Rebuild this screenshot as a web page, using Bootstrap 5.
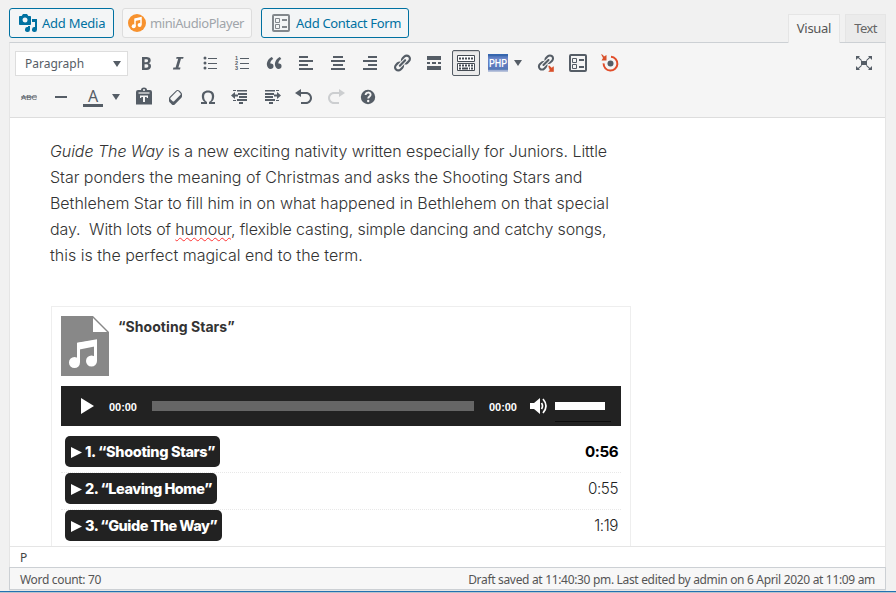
<!DOCTYPE html>
<html lang="en">
<head>
<meta charset="utf-8">
<meta name="viewport" content="width=device-width, initial-scale=1">
<title>Edit post</title>
<link rel="stylesheet" href="https://cdn.jsdelivr.net/npm/bootstrap@5.3.0/dist/css/bootstrap.min.css">
<style>
body{background:#f1f1f1;font-family:"Noto Sans","Open Sans",sans-serif;font-size:13px;color:#555d66;height:593px;overflow:hidden}
svg{display:block;flex:none}
.wp-page{height:593px;padding:0 10px 0 9px}
.media-bar{height:42px;padding-top:8px}
.btn-media{--bs-btn-font-size:13px;--bs-btn-color:#0071a1;--bs-btn-bg:#f3f5f6;--bs-btn-border-color:#0071a1;--bs-btn-border-radius:3px;--bs-btn-padding-x:0;--bs-btn-padding-y:0;height:30px;line-height:28px;padding-left:8px;letter-spacing:-.24px;white-space:nowrap;text-align:left}
.btn-media.disabled{--bs-btn-disabled-color:#a0a5aa;--bs-btn-disabled-bg:#f7f7f7;--bs-btn-disabled-border-color:#ddd;--bs-btn-disabled-opacity:1;letter-spacing:-.42px;padding-left:5px}
.w-add{width:105px}.w-mini{width:130px;margin-left:8px}.w-form{width:148px;margin-left:9px;letter-spacing:-.32px}
.w-form svg{margin:0 6px 0 2px}
.w-mini svg{margin-right:4px}
.ed-tab{height:28px;border:1px solid #e5e5e5;border-bottom:0;background:#ebebeb;color:#666;line-height:27px;letter-spacing:-.6px;text-align:center}
.ed-tab.current{background:#f5f5f5;color:#555;height:29px;width:52px;margin-right:5px;letter-spacing:-.3px}
.ed-tab.other{width:41px}
.tabs-row{height:29px;margin-bottom:-1px;z-index:1}
.editor{border:1px solid #e5e5e5;border-top-color:#ccd0d4;height:549px;background:#fff}
.tools{height:75px;background:#f5f5f5;border-bottom:1px solid #ddd;color:#555d66;padding:3px 0 0 3px}
.tool-row{height:34px}
.tool{width:32px;height:34px;display:flex;align-items:center;justify-content:center;flex:none}
.format-select{width:113px;height:25px;border:1px solid #ddd;background:#fff;font-size:12px;margin:0 2px;padding:1px 6px 0 9px}
.caret-cell{width:19px;height:34px;flex:none}
.caret-cell svg{margin-left:3px}
.caret-cell.narrow{width:16px}
.caret-cell.narrow svg{margin-left:0}
.full-tool{margin-right:3px}
.pressed{width:28px;height:26px;border:1px solid #555d66;border-radius:2px;background:#ebebeb;box-shadow:inset 0 1px 1px #ccc}
.doc{height:429px;overflow:hidden;padding:20px 0 0 41px;font-family:Inter,"Open Sans",sans-serif;color:#333;border-bottom:1px solid #e5e5e5}
.prose{font-size:16px;font-weight:300;line-height:26px;height:168px;white-space:pre;margin-left:-1px}
.prose div{height:26px}
.l1{letter-spacing:-.063px}.l2{letter-spacing:-.035px}.l3{letter-spacing:-.02px}.l4{letter-spacing:-.135px}.l5{letter-spacing:0}
.squiggle{text-decoration:underline wavy #f33 1px;text-underline-offset:2px;text-decoration-skip-ink:none}
.playlist{width:580px;height:300px;border:1px solid #eee;padding:9px;background:#fff}
.now{height:70px;font-size:14px;font-weight:700;line-height:21px;letter-spacing:.05px}
.now-title{margin-left:9px}
.player{height:40px;background:#222;color:#fff;font:700 11px/42px "Liberation Sans",sans-serif;padding-left:19px}
.clock{width:28px;margin:2px 0 0 15px;white-space:nowrap;letter-spacing:-.05px}
.rail{width:322px;height:10px;background:#666;margin-left:15px}
.vol-wrap{width:56px;height:40px;margin-left:7px;padding-top:16px}
.vol{width:50px;height:8px;background:#fff;margin-bottom:11px}
.vol-base{height:1px;background:#0c0c0c}
.speaker{margin-left:12px}
.tracks{padding-top:10px}
.track{height:37px;border-bottom:1px dotted #e8e8e8;padding:0 3px 5px 4px;font-size:15.2px;font-weight:300;letter-spacing:-.4px;color:#222}
.chip{height:31px;border-radius:5px;background:#222;color:#fff;font-size:14.5px;font-weight:800;padding:1px 0 0 6px;white-space:pre}
.time{padding-top:1px}
.chip svg{margin-right:3px}
.c1{width:155px;letter-spacing:-.35px}.c2{width:152px;letter-spacing:-.49px}.c3{width:157px;letter-spacing:-.52px}
.on{font-weight:700;color:#000;letter-spacing:-.5px}
.path-row{height:20px;font-size:12px;line-height:21px;padding-left:10px;color:#444}
.status{height:23px;margin:0 -1px;border:1px solid #ccd0d4;background:#f7f7f7;font-size:12px;line-height:23px;padding:0 10px;color:#555;letter-spacing:-.325px;white-space:nowrap}
.foot-line{height:2px;background:#2271b1;border-bottom:1px solid #b9c3cb;margin:0 -10px 0 -9px}
</style>
<script src="https://cdn.jsdelivr.net/npm/bootstrap@5.3.0/dist/js/bootstrap.bundle.min.js"></script>
</head>
<body>
<svg class="d-none">
<symbol id="form" viewBox="0 0 18 18"><rect x="1" y="1" width="16" height="16" rx="1" fill="none" stroke="currentColor" stroke-width="2"/><path d="M3.5 4.500h4v4h-4zM3.5 10.500h4v4h-4z" fill="none" stroke="currentColor"/><path d="M10 5h5v2h-5zM10 12h5v2h-5z" fill="currentColor"/></symbol>
<symbol id="link" viewBox="0 0 20 20"><path fill="currentColor" d="M17.74 2.76c1.68 1.69 1.68 4.41 0 6.1l-1.53 1.52c-1.12 1.12-2.7 1.47-4.14 1.09l2.62-2.61.76-.77.76-.76c.84-.84.84-2.2 0-3.04-.84-.85-2.2-.85-3.04 0l-.77.76-3.38 3.38c-.37-1.44-.02-3.02 1.1-4.14l1.52-1.53c1.69-1.68 4.42-1.68 6.1 0zM8.590 13.430l5.340-5.340c.42-.42.42-1.1 0-1.520-.44-.43-1.130-.39-1.530 0l-5.330 5.340c-.42.42-.42 1.1 0 1.520.44.43 1.130.39 1.520 0zm-.76 2.290l4.140-4.150c.38 1.440.03 3.020-1.090 4.140l-1.520 1.530c-1.690 1.680-4.410 1.680-6.100 0-1.680-1.680-1.680-4.420 0-6.100l1.530-1.520c1.120-1.120 2.700-1.470 4.140-1.100l-4.140 4.150c-.85.84-.85 2.200 0 3.050.84.84 2.200.84 3.040 0z"/></symbol>
<symbol id="caret" viewBox="0 0 8 6"><path d="M0 0h8L4 6z" fill="currentColor"/></symbol>
<symbol id="play" viewBox="0 0 11 11"><path d="M0 0l11 5.500L0 11z" fill="#fff"/></symbol>
</svg>
<main class="wp-page">
  <header class="d-flex justify-content-between">
    <div class="media-bar d-flex">
      <button class="btn btn-media w-add d-flex align-items-center"><svg width="20" height="20" viewBox="0 0 20 20" class="me-1" fill="currentColor"><path d="M13 11V4c0-.55-.45-1-1-1h-1.670L9 1H5L3.670 3H2c-.55 0-1 .45-1 1v7c0 .55.45 1 1 1h10c.55 0 1-.45 1-1zM7 4.500a2.500 2.500 0 1 1 0 5 2.500 2.500 0 0 1 0-5zM14 6h5v10.500a2.500 2.500 0 1 1-2-2.450V9h-3V6zm-4 8.050V13h2v3.500a2.500 2.500 0 1 1-2-2.450z" fill-rule="evenodd"/></svg><span>Add Media</span></button>
      <button class="btn btn-media w-mini disabled d-flex align-items-center"><svg width="18" height="18" viewBox="0 0 18 18"><circle cx="9" cy="9" r="9" fill="#f7922f"/><path d="M7 12V5l6-1.300v7" fill="none" stroke="#fff" stroke-width="1.500"/><path d="M7 5l6-1.300v2L7 7z" fill="#fff"/><circle cx="5.700" cy="12.200" r="2" fill="#fff"/><circle cx="11.600" cy="11" r="2" fill="#fff"/></svg><span>miniAudioPlayer</span></button>
      <button class="btn btn-media w-form d-flex align-items-center"><svg width="18" height="18" color="#82878c"><use href="#form"/></svg><span>Add Contact Form</span></button>
    </div>
    <div class="tabs-row d-flex align-self-end position-relative"><div class="ed-tab current">Visual</div><div class="ed-tab other">Text</div></div>
  </header>
  <section class="editor">
    <div class="tools">
      <div class="tool-row d-flex align-items-center">
        <div class="format-select d-flex align-items-center justify-content-between"><span>Paragraph</span><svg width="8" height="6"><use href="#caret"/></svg></div>
        <span class="tool"><svg width="20" height="20" fill="currentColor"><path fill-rule="evenodd" d="M6 4v13h4.540c1.370 0 2.460-.33 3.260-1 .8-.66 1.200-1.580 1.200-2.770 0-.84-.17-1.510-.51-2.010s-.9-.85-1.670-1.030v-.09c.57-.1 1.020-.4 1.360-.9s.51-1.130.51-1.910c0-1.140-.39-1.980-1.170-2.500C12.750 4.260 11.500 4 9.780 4H6zm2.570 5.150V6.260h1.360c.73 0 1.270.11 1.610.32.34.22.51.58.51 1.070 0 .54-.16.92-.47 1.150s-.82.35-1.510.35h-1.500zm0 2.190h1.600c1.440 0 2.160.53 2.160 1.610 0 .6-.17 1.050-.51 1.340s-.86.43-1.570.43H8.570v-3.380z"/></svg></span>
        <span class="tool"><svg width="20" height="20" fill="currentColor"><path d="M15.600 4l-.5 1.800h-2.100l-2.600 8.800h2.100l-.5 1.900H4.900l.5-1.900h2.200l2.600-8.800H8.100l.5-1.800z"/></svg></span>
        <span class="tool"><svg width="20" height="20" fill="currentColor"><circle cx="5" cy="5" r="1.500"/><circle cx="5" cy="10" r="1.500"/><circle cx="5" cy="15" r="1.500"/><path d="M8 5h9v1H8zM8 10h9v1H8zM8 15h9v1H8z"/></svg></span>
        <span class="tool"><svg width="20" height="20" fill="currentColor"><g font-family="Liberation Sans" font-size="5.500" font-weight="700"><text x="3" y="7">1</text><text x="3" y="12">2</text><text x="3" y="17">3</text></g><path d="M8 5h9v1H8zM8 10h9v1H8zM8 15h9v1H8z"/></svg></span>
        <span class="tool"><svg width="20" height="20" fill="currentColor"><path d="M9.490 13.220c0-.74-.2-1.380-.61-1.900-.62-.78-1.830-.88-2.530-.72-.29-1.650 1.110-3.750 2.920-4.650L7.880 4c-2.730 1.300-5.420 4.280-4.960 8.050C3.210 14.430 4.590 16 6.540 16c.85 0 1.560-.25 2.120-.75s.83-1.180.83-2.030zm8.050 0c0-.74-.2-1.380-.61-1.900-.63-.78-1.830-.88-2.530-.72-.29-1.650 1.110-3.750 2.920-4.650L15.930 4c-2.730 1.300-5.410 4.280-4.950 8.050.29 2.380 1.660 3.950 3.610 3.950.85 0 1.560-.25 2.120-.75s.83-1.180.83-2.030z"/></svg></span>
        <span class="tool"><svg width="20" height="20" fill="currentColor"><path d="M3 3h9v2H3zM3 7h14v2H3zM3 11h9v2H3zM3 15h14v2H3z"/></svg></span>
        <span class="tool"><svg width="20" height="20" fill="currentColor"><path d="M5 3h10v2H5zM3 7h14v2H3zM5 11h10v2H5zM3 15h14v2H3z"/></svg></span>
        <span class="tool"><svg width="20" height="20" fill="currentColor"><path d="M8 3h9v2H8zM3 7h14v2H3zM8 11h9v2H8zM3 15h14v2H3z"/></svg></span>
        <span class="tool"><svg width="20" height="20"><use href="#link"/></svg></span>
        <span class="tool"><svg width="20" height="20" fill="currentColor"><path d="M3 3h14v4H3zM3 9h3v2H3zM8 9h4v2H8zM14 9h3v2h-3zM3 13h14v4H3z"/></svg></span>
        <span class="tool"><span class="pressed d-flex align-items-center justify-content-center"><svg width="18" height="16" fill="none" stroke="#444b53"><path d="M.5.500h17v6H.5zM.5 8.500h17v7H.5z" fill="#fff"/><path d="M2 3.500h14M2 10.500h14" stroke-width="2" stroke-dasharray="2 1"/><path d="M2 13.500h2M5 13.500h6M12 13.500h1M14 13.500h2" stroke-width="2"/></svg></span></span>
        <span class="tool"><svg width="20" height="20"><defs><linearGradient id="pg" x2="0" y2="1"><stop stop-color="#2e62ad"/><stop offset=".25" stop-color="#6b86c8"/><stop offset=".75" stop-color="#5b78bb"/><stop offset="1" stop-color="#c4ccdf"/></linearGradient></defs><path d="M0 1h20v18H0z" fill="url(#pg)"/><path d="M0 2.500h20M0 16h20" stroke="#3866ab"/><text x="1" y="13.500" font-family="Roboto" font-size="10" font-weight="500" fill="#fff" textLength="18" lengthAdjust="spacingAndGlyphs">PHP</text></svg></span>
        <span class="caret-cell narrow d-flex align-items-center"><svg width="8" height="6"><use href="#caret"/></svg></span>
        <span class="tool"><svg width="20" height="20"><use href="#link" width="19" height="19"/><path d="M12 13l1.500-.5 2 2L18 13v6h-6l1.500-2z" fill="#d9502a" stroke="#f5f5f5" stroke-width=".4"/></svg></span>
        <span class="tool"><svg width="18" height="18"><use href="#form"/></svg></span>
        <span class="tool"><svg width="20" height="20"><path d="M11 3.800a6.900 6.900 0 1 1-7.400 6.600" fill="none" stroke="#e14d2a" stroke-width="2"/><path d="M1 1l2 1 1 1.500L6.500 2v5.500H1.500L3 5z" fill="#d9502a"/><circle cx="10.500" cy="10.500" r="3" fill="currentColor"/></svg></span>
        <span class="tool ms-auto full-tool"><svg width="20" height="20" fill="currentColor" class="me-1"><path d="M7 8h6v4H7z"/><path d="M2 3h4L4.800 4.200 8 7.300 7.300 8 4 4.900 2 7zM18 3h-4l1.200 1.200L12 7.300l.7.7L16 4.900 18 7zM2 17h4l-1.200-1.200L8 12.700 7.300 12 4 15.100 2 13zM18 17h-4l1.200-1.200-3.200-3.100.7-.7 3.300 3.100L18 13z"/></svg></span>
      </div>
      <div class="tool-row d-flex align-items-center">
        <span class="tool"><svg width="20" height="20" fill="currentColor"><text x="2" y="13" font-family="Liberation Sans" font-size="8" textLength="16" lengthAdjust="spacingAndGlyphs">ABC</text><path d="M2 9.500h16v1H2z"/></svg></span>
        <span class="tool"><svg width="20" height="20" fill="currentColor"><path d="M4 9h12v2H4z"/></svg></span>
        <span class="tool"><svg width="20" height="26" fill="currentColor"><text x="10" y="18" text-anchor="middle" font-family="Noto Sans" font-size="16">A</text><path d="M0 20h20v3H0z"/></svg></span>
        <span class="caret-cell d-flex align-items-center"><svg width="8" height="6"><use href="#caret"/></svg></span>
        <span class="tool"><svg width="20" height="20"><path d="M4 3h3c0-1.500 1-2.500 3-2.500S13 1.500 13 3h3a2 2 0 0 1 2 2v12.500H2V5a2 2 0 0 1 2-2z" fill="currentColor"/><path d="M4.500 6h11" stroke="#f5f5f5" stroke-width="1.200"/><circle cx="10" cy="3" r="1" fill="#f5f5f5"/><path d="M6 8.500h8v2.500h-1l-.5-1H11v5h-2v-5H7.500L7 11H6z" fill="#f5f5f5"/></svg></span>
        <span class="tool"><svg width="20" height="20" fill="currentColor"><path fill-rule="evenodd" d="M14.290 4.590l1.100 1.110c.41.4.61.94.61 1.470v2.120c0 .53-.2 1.070-.61 1.470l-6.630 6.630c-.4.41-.94.61-1.470.61s-1.070-.2-1.470-.61l-1.110-1.100-1.100-1.110c-.41-.4-.61-.94-.61-1.470v-2.120c0-.54.2-1.070.61-1.480l6.630-6.620c.4-.41.94-.61 1.470-.61s1.060.2 1.470.61zm-6.210 9.700l6.420-6.420c.39-.39.39-1.030 0-1.430L12.360 4.300c-.19-.19-.45-.29-.72-.29s-.52.1-.71.29l-6.420 6.420c-.39.4-.39 1.040 0 1.430l2.140 2.140c.38.38 1.040.38 1.430 0z"/></svg></span>
        <span class="tool"><svg width="20" height="20" fill="currentColor"><path d="M10 5.400c1.270 0 2.240.36 2.910 1.080.66.71 1 1.760 1 3.130 0 1.280-.23 2.370-.69 3.270-.47.89-1.270 1.520-2.220 2.120v2h6v-2h-3.690c.92-.64 1.620-1.340 2.120-2.340.49-1.010.74-2.130.74-3.350 0-1.780-.55-3.190-1.650-4.220S11.920 3.540 10 3.540s-3.430.53-4.520 1.570c-1.100 1.040-1.650 2.440-1.650 4.200 0 1.210.24 2.310.73 3.330.48 1.010 1.190 1.710 2.100 2.360H3v2h6v-2c-.98-.64-1.800-1.280-2.240-2.170-.45-.89-.67-1.960-.67-3.220 0-1.370.33-2.410 1-3.130C7.750 5.760 8.720 5.400 10 5.400z"/></svg></span>
        <span class="tool"><svg width="20" height="20" fill="currentColor"><path d="M3 3h3v1H3zM7 3h10v1.500H7zM8 6h9v2H8zM9 9h8v2H9zM7 12h10v2H7zM3 13h3v1H3zM9 15h4v2H9zM1 8.500L5 5v2.500h3v2H5V12z"/></svg></span>
        <span class="tool"><svg width="20" height="20" fill="currentColor"><path d="M3 3h10v1.500H3zM14 3h3v1h-3zM3 6h9v2H3zM3 9h8v2H3zM3 12h10v2H3zM14 13h3v1h-3zM7 15h4v2H7zM19 8.500L15 5v2.500h-3v2h3V12z"/></svg></span>
        <span class="tool"><svg width="20" height="20" fill="currentColor"><path d="M12 5H7V2L1 6l6 4V7h5c2.200 0 4 1.800 4 4s-1.800 4-4 4H7v2h5c3.300 0 6-2.700 6-6s-2.700-6-6-6z"/></svg></span>
        <span class="tool opacity-25"><svg width="20" height="20" fill="currentColor"><path d="M8 5h5V2l6 4-6 4V7H8c-2.200 0-4 1.800-4 4s1.800 4 4 4h5v2H8c-3.300 0-6-2.700-6-6s2.700-6 6-6z"/></svg></span>
        <span class="tool"><svg width="20" height="20"><circle cx="10" cy="10" r="7.200" fill="currentColor"/><path d="M7.600 8c0-3.200 5-3.200 5-.2 0 1.800-2.400 1.700-2.400 3.700" fill="none" stroke="#f5f5f5" stroke-width="1.900"/><circle cx="10.200" cy="14" r="1.200" fill="#f5f5f5"/></svg></span>
      </div>
    </div>
    <article class="doc">
      <div class="prose"><div class="l1"><em>Guide The Way</em> is a new exciting nativity written especially for Juniors. Little</div><div class="l2">Star ponders the meaning of Christmas and asks the Shooting Stars and</div><div class="l3">Bethlehem Star to fill him in on what happened in Bethlehem on that special</div><div class="l4">day.&nbsp; With lots of <span class="squiggle">humour</span>, flexible casting, simple dancing and catchy songs,</div><div class="l5">this is the perfect magical end to the term.</div></div>
      <div class="playlist">
        <div class="now d-flex"><svg width="48" height="60"><path d="M0 0h32l16 16v44H0z" fill="#888"/><path d="M32 2v14h14z" fill="#fff"/><path d="M17.500 46V28l17-3v20" fill="none" stroke="#fff" stroke-width="3"/><path d="M16 27l20-3v6l-20 4z" fill="#fff"/><circle cx="13.500" cy="46.500" r="5.500" fill="#fff"/><circle cx="30.500" cy="45" r="5.500" fill="#fff"/></svg><span class="now-title">“Shooting Stars”</span></div>
        <div class="player d-flex align-items-center"><svg width="14" height="16"><path d="M1 0L14 8 1 16z" fill="#fff"/></svg><span class="clock">00:00</span><span class="rail"></span><span class="clock">00:00</span><svg width="19" height="18" class="speaker"><path d="M1 6h4l6-5v16l-6-5H1z" fill="#fff"/><path d="M12.500 6q2 3 0 6M14 2q6 7 0 14" fill="none" stroke="#fff" stroke-width="1.700"/></svg><div class="vol-wrap"><div class="vol"></div><div class="vol-base"></div></div></div>
        <div class="tracks">
          <div class="track d-flex justify-content-between align-items-center"><span class="chip c1 d-flex align-items-center"><svg width="11" height="11"><use href="#play"/></svg>1. “Shooting Stars”</span><span class="time on">0:56</span></div>
          <div class="track d-flex justify-content-between align-items-center"><span class="chip c2 d-flex align-items-center"><svg width="11" height="11"><use href="#play"/></svg>2. “Leaving Home”</span><span class="time">0:55</span></div>
          <div class="track d-flex justify-content-between align-items-center"><span class="chip c3 d-flex align-items-center"><svg width="11" height="11"><use href="#play"/></svg>3. “Guide The Way”</span><span class="time">1:19</span></div>
        </div>
      </div>
    </article>
    <div class="path-row">P</div>
    <footer class="status d-flex justify-content-between"><span>Word count: 70</span><span>Draft saved at 11:40:30 pm. Last edited by admin on 6 April 2020 at 11:09 am</span></footer>
  </section>
  <div class="foot-line"></div>
</main>
</body>
</html>
